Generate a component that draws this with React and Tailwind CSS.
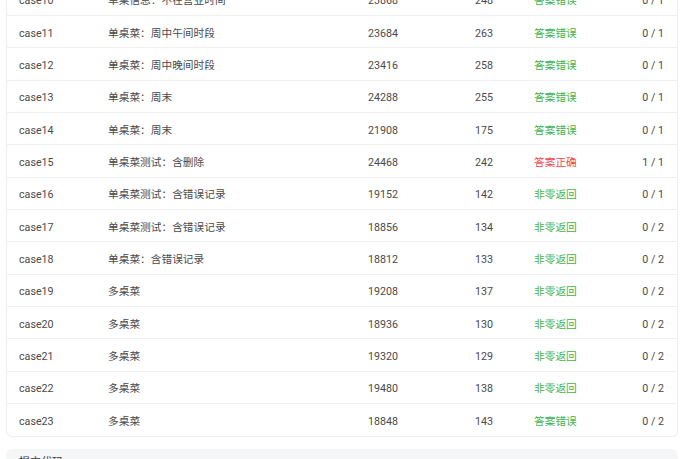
import React from 'react';

const rows = [
  { id: 'case10', desc: '单桌信息：不在营业时间', time: 23868, mem: 248, status: '答案错误', score: '0 / 1' },
  { id: 'case11', desc: '单桌菜：周中午间时段', time: 23684, mem: 263, status: '答案错误', score: '0 / 1' },
  { id: 'case12', desc: '单桌菜：周中晚间时段', time: 23416, mem: 258, status: '答案错误', score: '0 / 1' },
  { id: 'case13', desc: '单桌菜：周末', time: 24288, mem: 255, status: '答案错误', score: '0 / 1' },
  { id: 'case14', desc: '单桌菜：周末', time: 21908, mem: 175, status: '答案错误', score: '0 / 1' },
  { id: 'case15', desc: '单桌菜测试：含删除', time: 24468, mem: 242, status: '答案正确', score: '1 / 1' },
  { id: 'case16', desc: '单桌菜测试：含错误记录', time: 19152, mem: 142, status: '非零返回', score: '0 / 1' },
  { id: 'case17', desc: '单桌菜测试：含错误记录', time: 18856, mem: 134, status: '非零返回', score: '0 / 2' },
  { id: 'case18', desc: '单桌菜：含错误记录', time: 18812, mem: 133, status: '非零返回', score: '0 / 2' },
  { id: 'case19', desc: '多桌菜', time: 19208, mem: 137, status: '非零返回', score: '0 / 2' },
  { id: 'case20', desc: '多桌菜', time: 18936, mem: 130, status: '非零返回', score: '0 / 2' },
  { id: 'case21', desc: '多桌菜', time: 19320, mem: 129, status: '非零返回', score: '0 / 2' },
  { id: 'case22', desc: '多桌菜', time: 19480, mem: 138, status: '非零返回', score: '0 / 2' },
  { id: 'case23', desc: '多桌菜', time: 18848, mem: 143, status: '答案错误', score: '0 / 2' },
];

export default function App() {
  return (
    <div
      className="h-[459px] overflow-hidden bg-white pl-[6px] pr-[2px] text-[10.7px] text-[#4a4a4a]"
      style={{ fontFamily: 'Roboto, "Noto Sans CJK SC", sans-serif' }}
    >
      {/* results table, scrolled so case10 is cut at the top */}
      <div className="mt-[-16.33px] rounded-b-[6px] border border-t-0 border-[#eceef1]">
        {rows.map((r, i) => (
          <div
            key={r.id}
            className={`flex h-[32.33px] items-center pl-[12px] pr-[13px] pt-[4px] ${
              i < rows.length - 1 ? 'border-b border-[#f0f0f2]' : ''
            }`}
          >
            <div className="w-[89px]">{r.id}</div>
            <div className="w-[260px]">{r.desc}</div>
            <div className="w-[107px]">{r.time}</div>
            <div className="w-[59px]">{r.mem}</div>
            <div className={r.status === '答案正确' ? 'text-[#f5484a]' : 'text-[#3fb24a]'}>{r.status}</div>
            <div className="ml-auto">{r.score}</div>
          </div>
        ))}
      </div>

      {/* next panel */}
      <div className="mt-[12px] h-[40px] rounded-[6px] bg-[#f5f6f8] px-[13px] pt-[6px] text-[11px] text-[#333]">
        提交代码
      </div>
    </div>
  );
}
